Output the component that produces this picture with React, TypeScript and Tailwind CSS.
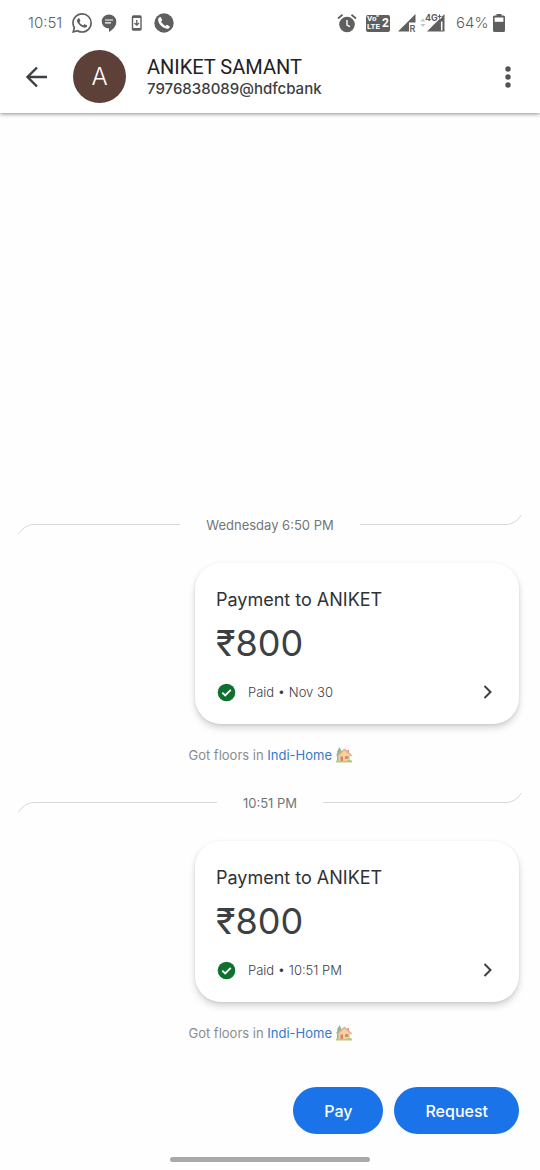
import type { ReactNode } from "react";

const sans = "font-['Inter','Liberation_Sans',sans-serif]";
const display = "font-['Inter','Roboto',sans-serif]";
const title = "font-['Roboto','Inter',sans-serif]";

function StatusBar() {
  return (
    <div className={`flex h-[46px] items-center justify-between pr-[35px] pl-7 text-[#5f5f5f] ${sans}`}>
      <div className="flex items-center">
        <span className="w-11 text-[15px] leading-5 font-light">10:51</span>
        <svg width="20" height="20" viewBox="0 0 24 24" fill="currentColor" aria-label="WhatsApp">
          <path d="M17.47 14.38c-.3-.15-1.76-.87-2.03-.97-.27-.1-.47-.15-.67.15-.2.3-.77.97-.94 1.16-.17.2-.35.22-.64.08-.3-.15-1.26-.46-2.39-1.48-.88-.79-1.48-1.76-1.65-2.06-.17-.3-.02-.46.13-.6.13-.14.3-.35.45-.53.15-.17.2-.3.3-.5.1-.2.05-.37-.03-.52-.07-.15-.67-1.61-.91-2.2-.24-.6-.49-.51-.67-.52h-.57c-.2 0-.52.07-.8.37-.27.3-1.04 1.02-1.04 2.48s1.07 2.87 1.22 3.07c.14.2 2.1 3.2 5.08 4.49.7.3 1.26.49 1.7.62.71.23 1.36.2 1.87.12.57-.08 1.76-.72 2-1.41.25-.7.25-1.29.18-1.41-.07-.13-.27-.2-.57-.35M12.05 21.8a9.87 9.87 0 0 1-5.03-1.38l-.36-.21-3.74.98 1-3.65-.24-.37a9.86 9.86 0 0 1-1.5-5.26c0-5.45 4.43-9.88 9.88-9.88a9.88 9.88 0 0 1 0 19.77m8.41-18.3A11.82 11.82 0 0 0 12.05 0C5.5 0 .16 5.34.16 11.9c0 2.1.55 4.14 1.59 5.94L.06 24l6.3-1.65a11.88 11.88 0 0 0 5.69 1.45c6.55 0 11.89-5.34 11.89-11.9a11.82 11.82 0 0 0-3.48-8.4" />
        </svg>
        <svg className="ml-[9px]" width="16" height="20" viewBox="0 0 16 20" aria-label="Messages">
          <path fill="currentColor" d="M8 1.500A7.300 7 0 0 0 8 15.500V19C12.500 16.500 15.500 12.500 15.300 8.500A7.300 7 0 0 0 8 1.500Z" />
          <path stroke="white" strokeWidth="1.200" d="M4 7H12M4 9.800H10" />
        </svg>
        <svg className="ml-3.5" width="12" height="16" viewBox="0 0 12 16" fill="none" stroke="currentColor" aria-label="System update">
          <rect x="1.500" y="1" width="8.500" height="14" rx="1" strokeWidth="1.400" />
          <path strokeWidth="2" d="M1.500 2H10M1.500 14H10" />
          <path strokeWidth="1.300" d="M5.750 5V10M3.500 8L5.750 10.200L8 8" />
        </svg>
        <svg className="ml-[11px]" width="20" height="20" viewBox="0 0 20 20" aria-label="Phone">
          <circle cx="10" cy="10" r="9.700" fill="currentColor" />
          <path fill="white" d="M6.600 4.100 8.300 7.100 7.100 8.500C8.100 10.400 9.400 11.800 11.400 12.900L12.900 11.700 15.900 13.400C15.600 15.100 14.300 15.900 12.900 15.700C8.200 14.900 4.700 11.200 4.100 7C4 5.500 5 4.400 6.600 4.100Z" />
        </svg>
      </div>
      <div className="flex items-center">
        <svg width="20" height="20" viewBox="0 0 20 20" aria-label="Alarm">
          <circle cx="10" cy="11.500" r="7.800" fill="currentColor" />
          <path d="M1 5.500 5.500 1.700M19 5.500 14.500 1.700" stroke="currentColor" strokeWidth="1.800" />
          <path d="M10 7V12L13 13.700" fill="none" stroke="white" strokeWidth="1.400" />
        </svg>
        <span className="ml-[9px] grid h-[17px] w-6 grid-cols-[16px_8px] items-center rounded-[2px] bg-[#5f5f5f] font-['Roboto','Inter',sans-serif] font-bold text-white">
          <span className="flex flex-col pl-px text-[8px] leading-[8px]">
            <span>Vo"</span>
            <span>LTE</span>
          </span>
          <span className="text-[12px] leading-[14px]">2</span>
        </span>
        <svg className="ml-2" width="18" height="20" viewBox="0 0 18 20" aria-label="Roaming signal">
          <path d="M0 18.500 17.500 1V9.500H11V18.500Z" fill="currentColor" />
          <text x="11.500" y="18.500" fontSize="9" fontWeight="600" fill="currentColor">R</text>
        </svg>
        <svg className="ml-[3px]" width="28" height="20" viewBox="0 0 28 20" aria-label="4G signal">
          <path d="M1.500 8.500 4 5.500 6.500 8.500ZM1.500 11 4 14 6.500 11Z" fill="#c4c4c4" />
          <path d="M8 18.500 25.500 1V18.500Z" fill="currentColor" />
          <path d="M22.700 8.500V17.500" stroke="white" strokeWidth="1.500" />
          <text x="6" y="7.500" fontSize="9" fontWeight="700" fill="currentColor" stroke="white" strokeWidth="1.500" paintOrder="stroke">4G</text>
          <path d="M18.500 3.500H23M20.750 1.200V5.800" stroke="white" strokeWidth="2.600" />
          <path d="M18.500 3.500H22.500M20.500 1.500V5.500" stroke="currentColor" strokeWidth="1.200" />
        </svg>
        <span className="ml-[9px] w-[35px] text-[15px] leading-5 font-light">64%</span>
        <svg className="ml-0.5" width="12" height="18" viewBox="0 0 12 18" aria-label="Battery">
          <path d="M3.500 0H8.500V1.500H10.500Q12 1.500 12 3V16.500Q12 18 10.500 18H1.500Q0 18 0 16.500V3Q0 1.500 1.500 1.500H3.500Z" fill="currentColor" />
          <rect x="1.600" y="3.500" width="8.800" height="4.300" fill="white" />
        </svg>
      </div>
    </div>
  );
}

function Divider({ children }: { children: ReactNode }) {
  return (
    <div className="flex h-5 items-center gap-[26px] px-[18px]">
      <div className="flex flex-1 items-center">
        <svg className="shrink-0" width="18" height="20" viewBox="0 0 18 20" fill="none" stroke="#d6d8d9">
          <path d="M.5 20Q7 10.500 16 10.500H18" />
        </svg>
        <div className="mt-px h-px flex-1 bg-[#d6d8d9]" />
      </div>
      <span className={`pt-px text-[13px] leading-5 text-[#737679] ${sans}`}>{children}</span>
      <div className="flex flex-1 items-center">
        <div className="mt-px h-px flex-1 bg-[#d6d8d9]" />
        <svg className="shrink-0" width="18" height="20" viewBox="0 0 18 20" fill="none" stroke="#d6d8d9">
          <path d="M0 10.500H2Q11 10.500 17.500 1" />
        </svg>
      </div>
    </div>
  );
}

function HouseIcon() {
  return (
    <svg width="16" height="16" viewBox="0 0 16 16" role="img" aria-label="House with garden">
      <path d="M3.500 0 .8 5H1.700L0 8.500H1V14H6V5Z" fill="#8fb898" />
      <path d="M2.500 8.500 8.500 3 14 8.500V15H2.500Z" fill="#f5d49c" />
      <path d="M11.300 3V5.500L13 7V3Z" fill="#dd9a80" />
      <path d="M1.500 9 8.500 2.500 15.500 9" fill="none" stroke="#e8a98e" strokeWidth="1.600" />
      <rect x="4.500" y="9.500" width="2.500" height="4.500" fill="#d6806a" />
      <rect x="9" y="9" width="3.500" height="3" fill="#d98b74" />
      <path d="M0 15.500V13.800Q2 12.500 4 14Q8 13.300 10 14Q13 11.800 16 13.800V15.500Z" fill="#b2cc80" />
    </svg>
  );
}

function Payment({ when }: { when: string }) {
  return (
    <>
      <button
        type="button"
        className="mr-[21px] ml-auto flex h-[161px] w-3/5 flex-col rounded-[26px] bg-white px-[21px] pt-[25px] text-left shadow-[0_4px_7px_rgba(0,0,0,0.16),0_1px_3px_rgba(0,0,0,0.08)]"
      >
        <span className={`text-[18px] leading-6 font-normal text-[#2f3235] ${display}`}>Payment to ANIKET</span>
        <span className={`mt-[9px] text-[36px] leading-11 text-[#3c4043] ${display}`}>₹800</span>
        <span className="mt-[17px] flex w-full items-center">
          <svg className="ml-px" width="19" height="19" viewBox="0 0 19 19" aria-hidden="true">
            <circle cx="9.500" cy="9.500" r="8.800" fill="#0f7030" />
            <path d="M5.300 9.700 8.200 12.500 13.800 6.800" fill="none" stroke="white" strokeWidth="1.800" />
          </svg>
          <span className={`ml-3 text-[13px] leading-5 font-light text-[#3c4043] ${sans}`}>Paid • {when}</span>
          <svg className="mr-[3px] ml-auto" width="14" height="16" viewBox="0 0 14 16" fill="none" stroke="#3c4043" strokeWidth="2" aria-hidden="true">
            <path d="M3.500 2 9.500 8 3.500 14" />
          </svg>
        </span>
      </button>
      <p className={`mt-[21px] mr-[188px] ml-auto flex items-center gap-1 text-[13px] leading-5 text-[#8a8d90] ${sans}`}>
        <span>
          Got floors in <a href="#indi-home" className="text-[#3579d0]">Indi-Home</a>
        </span>
        <HouseIcon />
      </p>
    </>
  );
}

export default function App() {
  return (
    <div className="flex min-h-screen flex-col bg-[#fefefe]">
      <header className="bg-white shadow-[0_1px_4px_rgba(0,0,0,0.45)]">
        <StatusBar />
        <div className="flex h-[67px] items-start pr-5 pl-6">
          <button type="button" aria-label="Back" className="mt-[18px]">
            <svg width="26" height="26" viewBox="0 0 26 26" fill="none" stroke="#3c4043" strokeWidth="2.400">
              <path d="M23 13H4.500M13 3.500 3.500 13 13 22.500" />
            </svg>
          </button>
          <div className={`mt-1 ml-[23px] flex size-[53px] items-center justify-center rounded-full bg-[#5d4037] text-[24px] font-light text-white ${display}`}>A</div>
          <div className="mt-2.5 ml-[21px] flex-1">
            <h1 className={`text-[20px] leading-[22px] font-normal text-[#202124] ${title}`}>ANIKET SAMANT</h1>
            <p className={`text-[15px] leading-[22px] font-medium text-[#3c4043] ${display}`}>7976838089@hdfcbank</p>
          </div>
          <button type="button" aria-label="More options" className="mt-[18px]">
            <svg width="24" height="26" viewBox="0 0 24 26" fill="#515457">
              <circle cx="12" cy="5" r="2.700" />
              <circle cx="12" cy="13" r="2.700" />
              <circle cx="12" cy="21" r="2.700" />
            </svg>
          </button>
        </div>
      </header>

      <main className="flex flex-1 flex-col justify-end">
        <Divider>Wednesday 6:50 PM</Divider>
        <div className="mt-[29px] mb-[27px] flex flex-col">
          <Payment when="Nov 30" />
        </div>
        <Divider>10:51 PM</Divider>
        <div className="mt-[29px] flex flex-col">
          <Payment when="10:51 PM" />
        </div>
      </main>

      <footer>
        <div className={`mt-11 flex justify-end gap-[11px] pr-[21px] text-[16px] font-medium text-white ${display}`}>
          <button type="button" className="h-[47px] rounded-full bg-[#1a73e8] px-[31px]">Pay</button>
          <button type="button" className="h-[47px] rounded-full bg-[#1a73e8] px-[31px]">Request</button>
        </div>
        <div className="mx-auto mt-[23px] mb-2 h-[5px] w-[200px] rounded-full bg-[#a9a9a9]" />
      </footer>
    </div>
  );
}
